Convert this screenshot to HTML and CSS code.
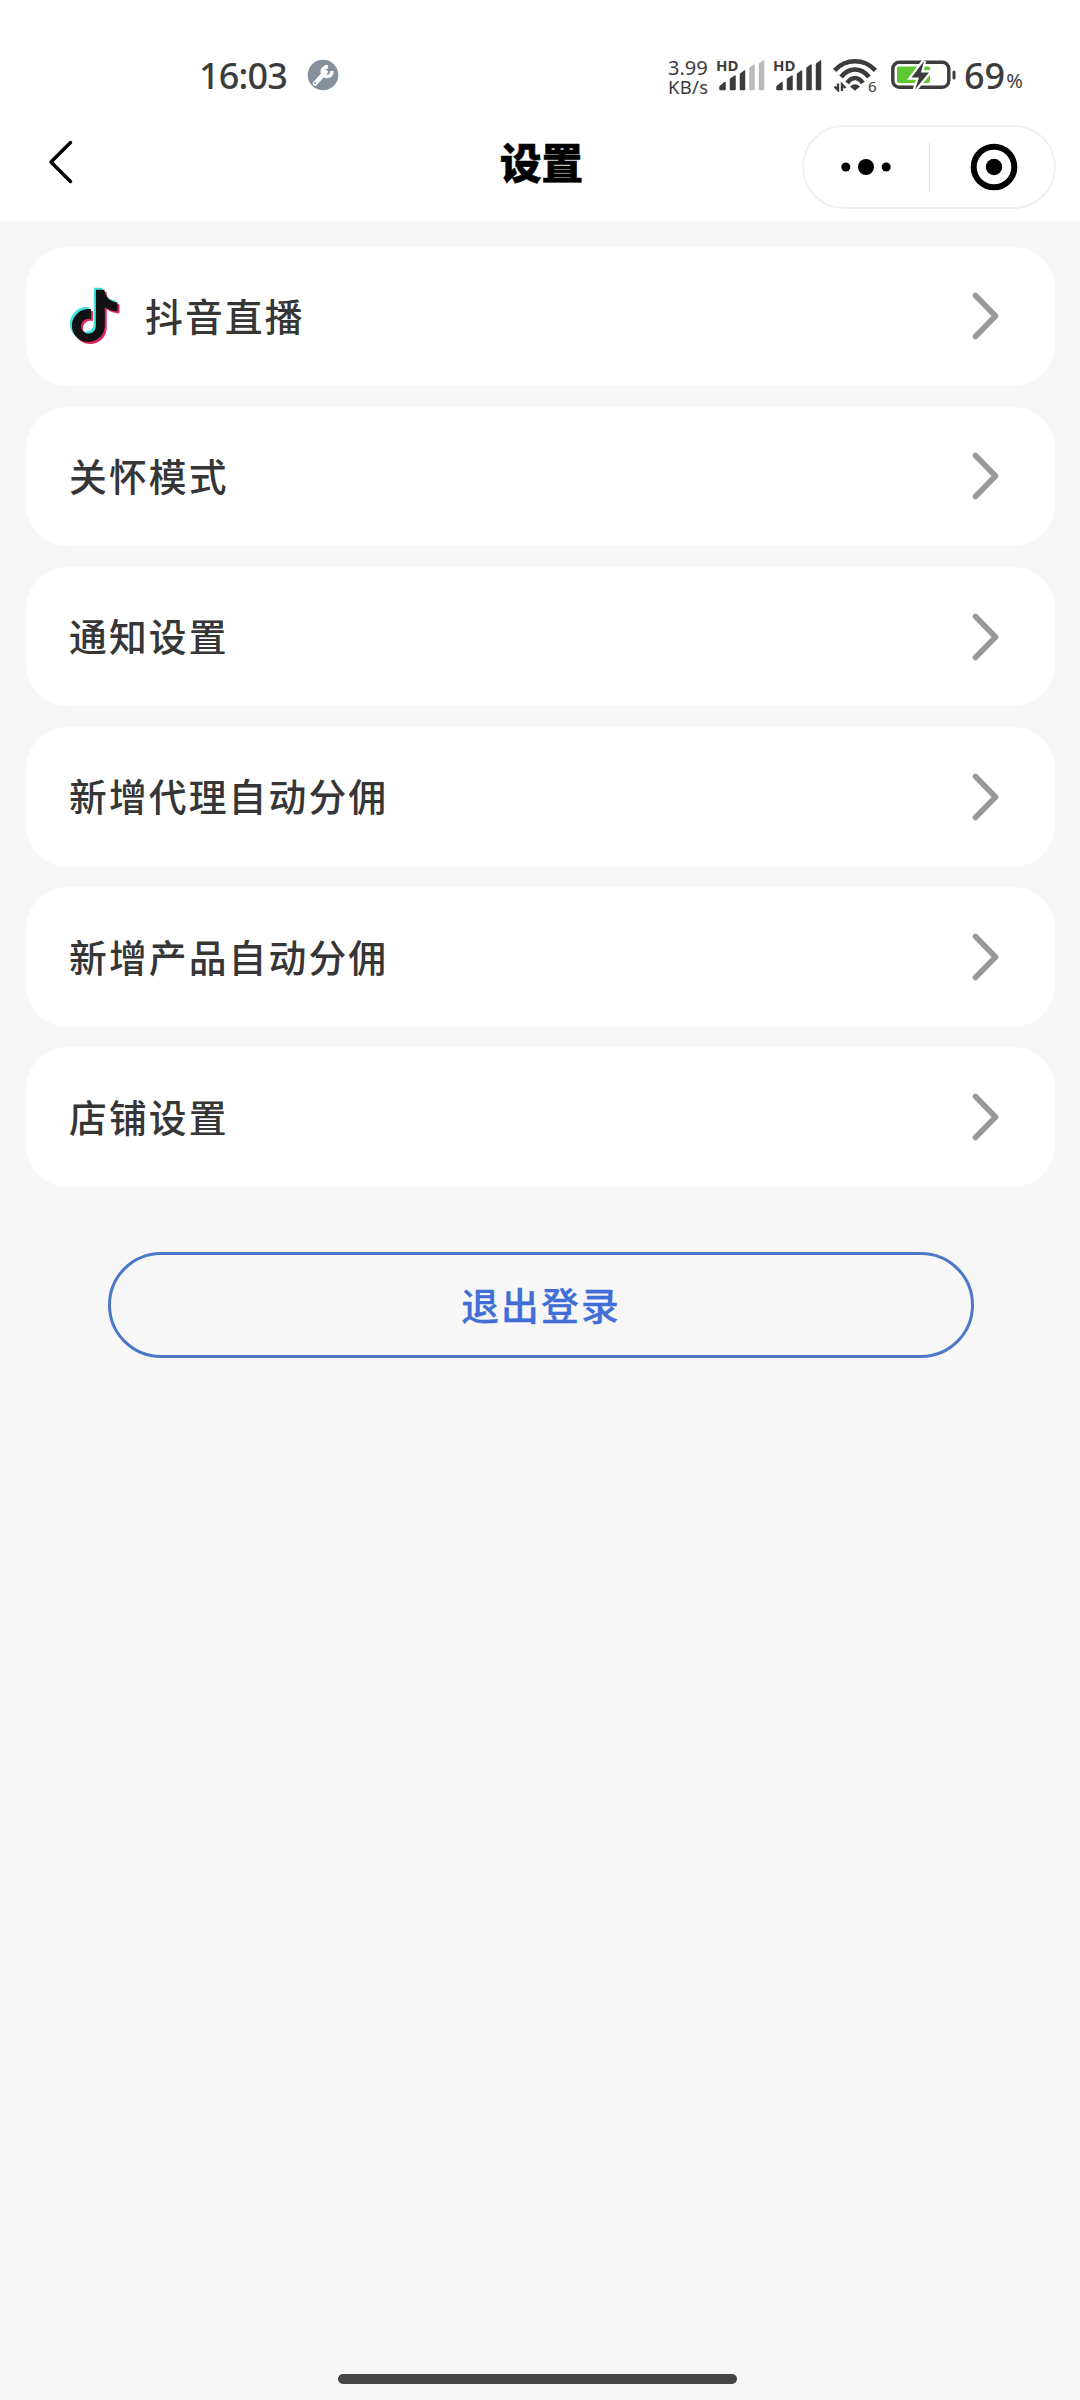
FILE: index.html
```html
<!DOCTYPE html>
<html lang="zh-CN">
<head>
<meta charset="utf-8">
<title>设置</title>
<link rel="stylesheet" href="styles.css">
</head>
<body>
<svg class="defs" aria-hidden="true">
  <symbol id="chevron" viewBox="0 0 28 48"><path d="M3.5 3.5 23.5 24 3.5 44.500" fill="none" stroke="#999" stroke-width="5.600" stroke-linecap="round" stroke-linejoin="round"/></symbol>
  <symbol id="note" viewBox="0 0 24 24"><path d="M12.525.02c1.31-.02 2.61-.01 3.91-.02.08 1.53.63 3.09 1.75 4.17 1.12 1.11 2.7 1.62 4.24 1.79v4.03c-1.44-.05-2.89-.35-4.2-.97-.57-.26-1.1-.59-1.62-.93-.01 2.92.01 5.84-.02 8.75-.08 1.4-.54 2.79-1.35 3.94-1.31 1.92-3.58 3.17-5.91 3.21-1.43.08-2.86-.31-4.08-1.03-2.02-1.19-3.44-3.37-3.65-5.71-.02-.5-.03-1-.01-1.49.18-1.9 1.12-3.72 2.58-4.96 1.66-1.44 3.98-2.13 6.15-1.72.02 1.48-.04 2.96-.04 4.44-.99-.32-2.15-.23-3.02.37-.63.41-1.11 1.04-1.36 1.75-.21.51-.15 1.07-.14 1.61.24 1.64 1.82 3.02 3.5 2.87 1.12-.01 2.19-.66 2.77-1.61.19-.33.4-.67.41-1.06.1-1.79.06-3.57.07-5.36.01-4.03-.01-8.05.02-12.07z"/></symbol>
</svg>
<div class="screen">
  <div class="header">
    <div class="status">
      <div class="status-left">
        <span class="clock">16:03</span>
        <svg class="tool" viewBox="0 0 32 32">
          <circle cx="16" cy="16" r="15.300" fill="#84919d"/>
          <path d="M8 24.500 18.500 13" stroke="#fff" stroke-width="4.600" stroke-linecap="round"/>
          <path d="M21 8A4.800 4.800 0 1 0 24.800 12" fill="none" stroke="#fff" stroke-width="3.600"/>
          <circle cx="8" cy="24.300" r="1" fill="#84919d"/>
        </svg>
      </div>
      <div class="status-right">
        <div class="speed"><span>3.99</span><span class="unit">KB/s</span></div>
        <div class="signal"><span class="hd">HD</span>
          <svg viewBox="0 0 48 32" width="48" height="32"><path d="M2 30.500v-3l5-4v7zM12.500 30.500V20l4.500-3v13.500zM22.500 30.500V15l4-3v18.500z" fill="#3c3c3c" stroke="#3c3c3c" stroke-width="1.500" stroke-linejoin="round"/><path d="M32 30.500V9l4-3v24.500zM41.500 30.500V5L45.500 2v28.500z" fill="#bbb" stroke="#bbb" stroke-width="1.500" stroke-linejoin="round"/></svg>
        </div>
        <div class="signal"><span class="hd">HD</span>
          <svg viewBox="0 0 48 32" width="48" height="32"><path d="M2 30.500v-3l5-4v7zM12.500 30.500V20l4.500-3v13.500zM22.500 30.500V15l4-3v18.500zM32 30.500V9l4-3v24.500zM41.500 30.500V5L45.500 2v28.500z" fill="#3c3c3c" stroke="#3c3c3c" stroke-width="1.500" stroke-linejoin="round"/></svg>
        </div>
        <div class="wifi">
          <svg viewBox="0 0 44 34" width="44" height="34"><g fill="none" stroke="#3c3c3c" stroke-width="4.600"><path d="M1.500 12.500Q10 3.300 22 3.300t20.500 9.200"/><path d="M8 19Q14 11.500 22 11.500T36 19"/><path d="M14.200 25Q17.500 20 22 20t7.800 5"/></g><path d="M17 28.500q5-4.500 10 0L22 32.800z" fill="#3c3c3c"/><path d="M5 25.500V32L1.500 28.500M9 33v-6.500l3.500 3.500" fill="none" stroke="#3c3c3c" stroke-width="2.400"/></svg>
          <span class="six">6</span>
        </div>
        <svg class="battery" viewBox="0 0 66 32" width="66" height="32">
          <rect x="1.800" y="3.300" width="56" height="25" rx="6.500" fill="#fff" stroke="#3c3c3c" stroke-width="3.400"/>
          <rect x="6" y="7.500" width="33" height="16.500" rx="2" fill="#5fc72f"/>
          <rect x="61.500" y="11.500" width="3" height="9" rx="1.500" fill="#3c3c3c"/>
          <path d="M33 2 20.500 18.500h7.500L24 30.500 38 13.500H30z" fill="#3c3c3c" stroke="#fff" stroke-width="4.500" paint-order="stroke"/>
        </svg>
        <span class="level">69</span><span class="percent">%</span>
      </div>
    </div>
    <div class="navbar">
      <svg class="back" viewBox="0 0 26 44" width="26" height="44"><path d="M22.500 2.500 3 22l19.500 19.500" fill="none" stroke="#000" stroke-width="3.500" stroke-linecap="round" stroke-linejoin="round"/></svg>
      <h1 class="title">设置</h1>
      <div class="capsule">
        <svg viewBox="0 0 50 20" width="50" height="20"><circle cx="4.800" cy="10" r="4.500"/><circle cx="25" cy="10" r="8"/><circle cx="45.200" cy="10" r="4.500"/></svg>
        <i class="divider"></i>
        <svg viewBox="0 0 48 48" width="48" height="48"><circle cx="24" cy="24" r="20.300" fill="none" stroke="#000" stroke-width="6"/><circle cx="24" cy="24" r="8.200"/></svg>
      </div>
    </div>
  </div>
  <div class="list">
    <div class="card">
      <svg class="douyin" viewBox="0 0 50 58" width="50" height="58"><use href="#note" x="-3.600" y="0.500" width="52.500" height="52.500" fill="#43e5da"/><use href="#note" x="0.400" y="4.500" width="52.500" height="52.500" fill="#e0255c"/><use href="#note" x="-1.500" y="2.500" width="52.500" height="52.500" fill="#101214"/></svg>
      <span>抖音直播</span><svg class="arrow"><use href="#chevron"/></svg></div>
    <div class="card"><span>关怀模式</span><svg class="arrow"><use href="#chevron"/></svg></div>
    <div class="card"><span>通知设置</span><svg class="arrow"><use href="#chevron"/></svg></div>
    <div class="card"><span>新增代理自动分佣</span><svg class="arrow"><use href="#chevron"/></svg></div>
    <div class="card"><span>新增产品自动分佣</span><svg class="arrow"><use href="#chevron"/></svg></div>
    <div class="card"><span>店铺设置</span><svg class="arrow"><use href="#chevron"/></svg></div>
  </div>
  <button class="logout">退出登录</button>
  <div class="home-bar"></div>
</div>
</body>
</html>
```
FILE: styles.css
```css
* { box-sizing: border-box; }
body { margin: 0; background: #f7f7f7; font-family: "Noto Sans CJK SC", sans-serif; }
.defs { display: none; }
.screen { width: 1080px; height: 2400px; display: flex; flex-direction: column; background: #f7f7f7; }
.header { height: 221px; background: #fff; }
svg { flex: none; display: block; }

.status { height: 125px; padding: 50px 51px 0 199px; display: flex; justify-content: space-between; font-family: "Noto Sans", sans-serif; color: #3c3c3c; }
.status-left { display: flex; height: 50px; align-items: center; }
.clock { font-size: 36px; line-height: 50px; font-weight: 500; width: 89px; white-space: nowrap; letter-spacing: -0.800px; padding-top: 1px; }
.tool { width: 32px; height: 32px; margin-left: 19px; }
.status-right { display: flex; height: 50px; width: 361px; }
.speed { width: 49px; display: flex; flex-direction: column; gap: 1px; font-size: 20px; line-height: 18px; padding-top: 9px; }
.unit { font-size: 18.500px; line-height: 18px; letter-spacing: 0.300px; }
.signal { position: relative; width: 57px; padding: 9px 0 0 1px; }
.hd { position: absolute; left: -1px; top: 8px; font-size: 15px; line-height: 15px; font-weight: 700; }
.wifi { position: relative; width: 59px; padding: 8px 0 0 2px; }
.six { position: absolute; left: 37px; top: 28px; font-size: 15px; line-height: 16px; }
.battery { margin: 9px 0 0 1px; }
.level { font-size: 36px; line-height: 51px; font-weight: 500; margin-left: 7px; }
.percent { font-size: 20px; line-height: 20px; margin: 21px 0 0 1px; }

.navbar { height: 84px; display: grid; grid-template-columns: 233px 1fr 254px; align-items: center; padding: 0 24px 0 48px; }
.back { margin-top: -10px; }
.title { margin: -12px 0 0; font-size: 41.500px; line-height: 60px; font-weight: 900; text-align: center; color: #000; -webkit-text-stroke: 0.600px #000; }
.capsule { height: 84px; border: 2px solid #f0f0f0; border-radius: 42px; display: flex; align-items: center; padding-left: 37px; }
.divider { width: 1px; height: 49px; background: #ddd; margin: 0 40px 0 38px; }

.list { display: flex; flex-direction: column; gap: 20.700px; padding: 25.500px 25px 0 26px; }
.card { height: 139.500px; border-radius: 42px; background: #fff; display: flex; align-items: center; padding: 0 55px 0 43px; font-size: 37.800px; font-weight: 500; letter-spacing: 2.100px; color: #363636; }
.card span { padding-bottom: 4px; }
.douyin { margin: 0 25px 0 1px; }
.arrow { width: 28px; height: 48px; margin-left: auto; }

.logout { width: 866px; height: 106px; margin: 65.500px 0 0 108px; border: 3px solid #4c78c8; border-radius: 53px; background: transparent; color: #3f6fd6; font: 500 37.800px/1 "Noto Sans CJK SC", sans-serif; letter-spacing: 2.100px; padding: 0 0 3px; -webkit-text-stroke: 0.300px #3f6fd6; }
.home-bar { width: 399px; height: 10px; border-radius: 5px; background: #464646; margin: auto 0 16px 338px; }
```
